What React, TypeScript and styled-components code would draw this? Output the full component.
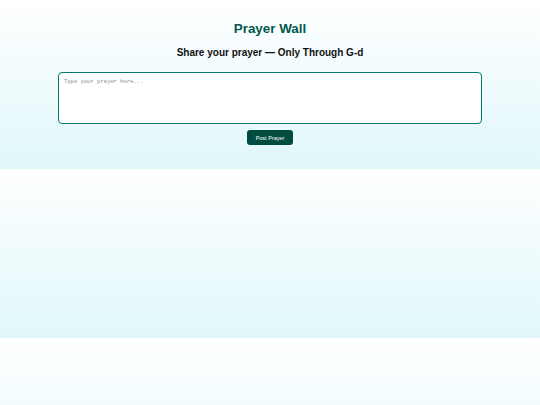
import React from "react";
import styled, { createGlobalStyle } from "styled-components";

const Global = createGlobalStyle`
  html { background: none; }
  body {
    margin: 0;
    background: linear-gradient(to bottom, #ffffff, #e0f7fa);
    font-family: "Liberation Sans", Arial, sans-serif;
  }
`;

const Page = styled.div`
  display: flex;
  flex-direction: column;
  align-items: center;
  padding: 21px 0 24px;
`;

const Title = styled.h1`
  margin: 0;
  font-size: 13.4px;
  line-height: 16px;
  font-weight: 700;
  color: #00594f;
`;

const Subtitle = styled.h2`
  margin: 9px 0 0;
  font-size: 10px;
  line-height: 14px;
  font-weight: 700;
  color: #111;
`;

const Input = styled.textarea`
  box-sizing: border-box;
  margin-top: 12px;
  width: 424px;
  height: 52px;
  padding: 5px;
  border: 1px solid #00796b;
  border-radius: 4px;
  background: #fff;
  resize: none;
  outline: none;
  font-family: "Liberation Mono", monospace;
  font-size: 5.5px;
  line-height: 7px;
  color: #333;
  display: block;
  &::placeholder {
    color: #8a8a8a;
  }
`;

const Button = styled.button`
  margin-top: 6px;
  width: 46px;
  height: 15px;
  padding: 0;
  border: none;
  border-radius: 3px;
  background: #004d40;
  color: #fff;
  font-family: "Liberation Sans", Arial, sans-serif;
  font-size: 5.5px;
  cursor: pointer;
`;

export default function App() {
  return (
    <>
      <Global />
      <Page>
        <Title>Prayer Wall</Title>
        <Subtitle>Share your prayer — Only Through G-d</Subtitle>
        <Input placeholder="Type your prayer here..." />
        <Button>Post Prayer</Button>
      </Page>
    </>
  );
}
